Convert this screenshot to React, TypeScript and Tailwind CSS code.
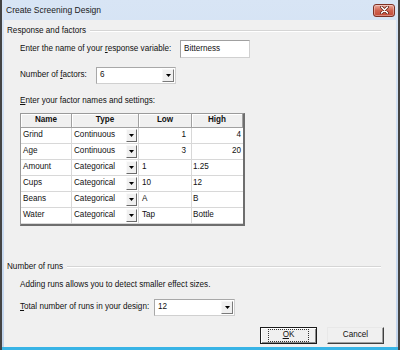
import React from "react";

type Factor = {
	name: string;
	type: string;
	low: string;
	high: string;
	right: boolean;
};

const FACTORS: Factor[] = [
	{ name: "Grind", type: "Continuous", low: "1", high: "4", right: true },
	{ name: "Age", type: "Continuous", low: "3", high: "20", right: true },
	{ name: "Amount", type: "Categorical", low: "1", high: "1.25", right: false },
	{ name: "Cups", type: "Categorical", low: "10", high: "12", right: false },
	{ name: "Beans", type: "Categorical", low: "A", high: "B", right: false },
	{ name: "Water", type: "Categorical", low: "Tap", high: "Bottle", right: false },
];

function Arrow() {
	return (
		<svg width="5" height="3" viewBox="0 0 5 3" className="block">
			<path d="M0 0h5L2.5 3z" fill="#000" />
		</svg>
	);
}

function GroupHeader({ label, className }: { label: string; className?: string }) {
	return (
		<div className={`flex h-[12px] items-center pl-[3px] pr-[15px] ${className ?? ""}`}>
			<span className="whitespace-nowrap">{label}</span>
			<div className="ml-[4px] h-[2px] flex-1 border-t border-b border-t-[#d5d5d5] border-b-white" />
		</div>
	);
}

function Combo({ value, width }: { value: string; width: string }) {
	return (
		<div
			className={`flex h-[17px] ${width} items-stretch border border-[#a8a8a8] border-r-[#d0d0d0] border-b-[#d0d0d0] bg-white`}
		>
			<div className="flex flex-1 items-center pl-[3px]">{value}</div>
			<div className="m-[1px] flex w-[12px] items-center justify-center border border-[#f8f8f8] border-r-[#7a7a7a] border-b-[#7a7a7a] bg-[#f0f0f0]">
				<Arrow />
			</div>
		</div>
	);
}

function HeadCell({ label, w }: { label: string; w: string }) {
	return (
		<div
			className={`${w} flex h-[14px] items-center justify-center border-r border-b border-[#a0a0a0] bg-[#f0f0f0] font-bold shadow-[inset_1px_1px_0_#fff]`}
		>
			{label}
		</div>
	);
}

export default function App() {
	return (
		<div className="flex h-[350px] w-[400px] flex-col overflow-hidden border-l-2 border-r-2 border-[#444] bg-gradient-to-b from-[#d8e5f5] to-[#c1d4ec] font-['Liberation_Sans',Arial,sans-serif] text-[8.15px] leading-none text-[#111]">
			{/* title bar */}
			<div className="flex h-[20px] shrink-0 items-center justify-between pl-[4px] pr-[3px]">
				<span className="text-[8.5px] text-[#1a1a1a]">Create Screening Design</span>
				<div className="flex h-[13px] w-[22px] items-center justify-center rounded-[3px] border border-[#7c3024] bg-gradient-to-b from-[#eba99c] via-[#d0624f] to-[#c44a36] shadow-[inset_0_0_0_1px_rgba(255,255,255,0.35)]">
					<svg width="9" height="8" viewBox="0 0 9 8">
						<path d="M1.5 1l6 6M7.5 1l-6 6" stroke="#5a1a10" strokeWidth="3" strokeLinecap="round" />
						<path d="M1.5 1l6 6M7.5 1l-6 6" stroke="#fff" strokeWidth="1.6" strokeLinecap="round" />
					</svg>
				</div>
			</div>

			{/* client area */}
			<div className="mx-[2px] flex flex-1 flex-col bg-[#f0f0f0]">
				<GroupHeader label="Response and factors" className="mt-[5px]" />

				<div className="mt-[3px] flex h-[18px] items-center pl-[16px]">
					<span className="w-[160px]">
						Enter the name of your <span className="underline">r</span>esponse variable:
					</span>
					<div className="flex h-[18px] w-[70px] items-center border border-[#a0a0a0] border-r-[#d0d0d0] border-b-[#d0d0d0] bg-white pl-[3px]">
						Bitterness
					</div>
				</div>

				<div className="mt-[9px] flex h-[17px] items-center pl-[16px]">
					<span className="w-[76px]">
						Number of <span className="underline">f</span>actors:
					</span>
					<Combo value="6" width="w-[80px]" />
				</div>

				<div className="mt-[11px] flex h-[12px] items-center pl-[16px]">
					<span>
						<span className="underline">E</span>nter your factor names and settings:
					</span>
				</div>

				<div className="mt-[6px] pl-[16px]">
					<div className="w-fit border-t border-l border-[#9a9a9a] border-r-2 border-b-2 border-r-[#6e6e6e] border-b-[#6e6e6e] bg-white">
						<div className="flex">
							<HeadCell label="Name" w="w-[51px]" />
							<HeadCell label="Type" w="w-[67px]" />
							<HeadCell label="Low" w="w-[53px]" />
							<HeadCell label="High" w="w-[51px]" />
						</div>
						{FACTORS.map((f) => (
							<div key={f.name} className="flex h-[16px]">
								<div className="flex w-[51px] items-center border-r border-b border-[#d8d8d8] pl-[2px]">
									{f.name}
								</div>
								<div className="flex w-[67px] items-stretch border-r border-b border-[#d8d8d8]">
									<div className="flex flex-1 items-center pl-[2px]">{f.type}</div>
									<div className="my-[1px] mr-[1px] flex w-[11px] items-center justify-center border border-[#fafafa] border-r-[#6a6a6a] border-b-[#6a6a6a] bg-[#f0f0f0]">
										<Arrow />
									</div>
								</div>
								<div
									className={`flex w-[53px] items-center border-r border-b border-[#d8d8d8] ${
										f.right ? "justify-end pr-[5px]" : "pl-[3px]"
									}`}
								>
									{f.low}
								</div>
								<div
									className={`flex w-[51px] items-center border-b border-[#d8d8d8] ${
										f.right ? "justify-end pr-[2px]" : "pl-[1px]"
									}`}
								>
									{f.high}
								</div>
							</div>
						))}
					</div>
				</div>

				<GroupHeader label="Number of runs" className="mt-[35px]" />

				<div className="mt-[6px] flex h-[12px] items-center pl-[16px]">
					Adding runs allows you to detect smaller effect sizes.
				</div>

				<div className="mt-[8px] flex h-[17px] items-center pl-[16px]">
					<span className="w-[134px]">
						<span className="underline">T</span>otal number of runs in your design:
					</span>
					<Combo value="12" width="w-[81px]" />
				</div>

				<div className="mt-[11px] flex justify-end gap-[10px] pr-[12px]">
					<button className="flex h-[17px] w-[57px] items-center justify-center border border-[#1a1a1a] bg-[#f0f0f0] shadow-[inset_1px_1px_0_#fff,inset_-1px_-1px_0_#8a8a8a]">
						<span className="border border-dotted border-[#333] px-[14px] py-[1px]">
							<span className="underline">O</span>K
						</span>
					</button>
					<button className="flex h-[17px] w-[57px] items-center justify-center border border-[#e8e8e8] border-r-[#404040] border-b-[#404040] bg-[#f0f0f0] shadow-[inset_-1px_-1px_0_#a0a0a0]">
						Cancel
					</button>
				</div>
			</div>

			<div className="h-[3px] shrink-0 bg-[#38b4e6]" />
		</div>
	);
}
